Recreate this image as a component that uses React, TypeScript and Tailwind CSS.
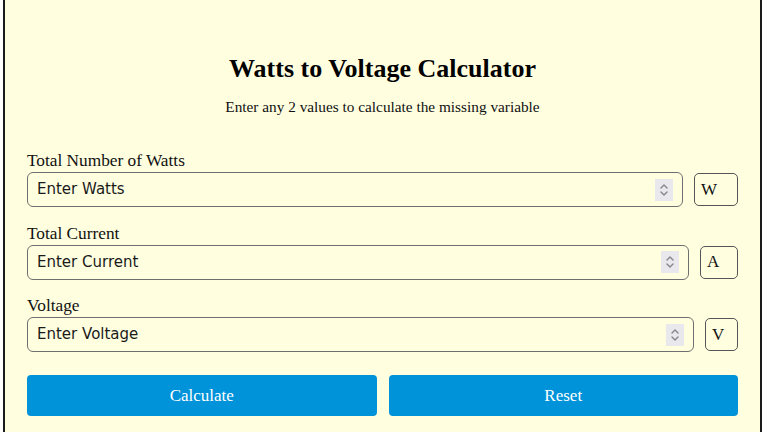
import React from "react";

function Spinner() {
  return (
    <div className="flex h-[22px] w-[18px] flex-col items-center justify-center bg-[#e9e9ed]">
      <svg width="10" height="16" viewBox="0 0 10 16" fill="none" stroke="#85858a" strokeWidth="1.4" strokeLinecap="round" strokeLinejoin="round">
        <path d="M2 6 L5 3 L8 6" />
        <path d="M2 10 L5 13 L8 10" />
      </svg>
    </div>
  );
}

function Row({ label, placeholder, unit, unitW }: { label: string; placeholder: string; unit: string; unitW: string }) {
  return (
    <div className="mb-[15.5px]">
      <div className="h-[22px] text-[17.3px] leading-[22px] text-[#111]" style={{ fontFamily: '"Liberation Serif", "Times New Roman", serif' }}>
        {label}
      </div>
      <div className="flex items-center gap-[11px]">
        <div className="flex h-[35px] flex-1 items-center justify-between rounded-[6px] border border-[#6f6f6f] pl-[9px] pr-[9px]">
          <span className="text-[15px] text-[#1a1a1a]" style={{ fontFamily: '"DejaVu Sans", Verdana, sans-serif' }}>
            {placeholder}
          </span>
          <Spinner />
        </div>
        <div
          className={`flex h-[33px] ${unitW} items-center rounded-[5px] border border-[#555] pl-[6px] text-[17px] text-[#111]`}
          style={{ fontFamily: '"Liberation Serif", "Times New Roman", serif' }}
        >
          {unit}
        </div>
      </div>
    </div>
  );
}

export default function App() {
  return (
    <div className="h-[432px] w-[768px] overflow-hidden bg-white">
      <div className="ml-[3px] h-[432px] w-[759px] border-x-2 border-[#1a1a1a] bg-[#ffffe0] px-[22px] pt-[54px]" style={{ fontFamily: '"Liberation Serif", "Times New Roman", serif' }}>
        <h1 className="text-center text-[26px] font-bold leading-[30px] text-black">Watts to Voltage Calculator</h1>
        <p className="mt-[13px] text-center text-[15.3px] leading-[20px] text-[#111]">Enter any 2 values to calculate the missing variable</p>
        <div className="mt-[33px]">
          <Row label="Total Number of Watts" placeholder="Enter Watts" unit="W" unitW="w-[44px]" />
          <Row label="Total Current" placeholder="Enter Current" unit="A" unitW="w-[38px]" />
          <Row label="Voltage" placeholder="Enter Voltage" unit="V" unitW="w-[33px]" />
        </div>
        <div className="mt-[23px] flex gap-[12px]">
          <button className="h-[41px] flex-1 rounded-[4px] bg-[#0093d9] text-[17px] text-white">Calculate</button>
          <button className="h-[41px] flex-1 rounded-[4px] bg-[#0093d9] text-[17px] text-white">Reset</button>
        </div>
      </div>
    </div>
  );
}
